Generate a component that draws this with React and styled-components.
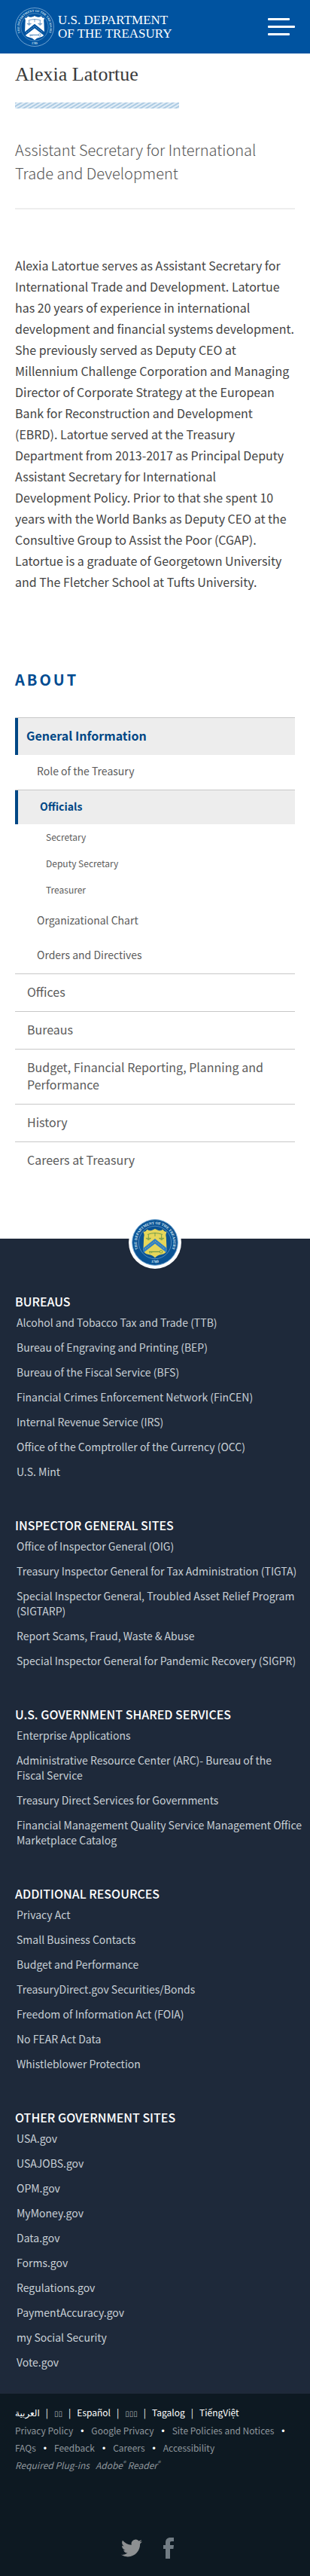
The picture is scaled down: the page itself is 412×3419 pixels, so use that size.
import React, { useId } from "react";
import styled, { createGlobalStyle } from "styled-components";

const sans = '"Noto Sans CJK SC", "Noto Sans", "DejaVu Sans", sans-serif';
const serif = '"Liberation Serif", serif';

const GlobalStyle = createGlobalStyle`
  *, *::before, *::after { box-sizing: border-box; }
  body {
    margin: 0;
    background: #fff;
    color: #444;
    font-family: ${sans};
    font-size: 16px;
  }
  h1, h2, h3, p, ul { margin: 0; padding: 0; }
  ul { list-style: none; }
  a { color: inherit; text-decoration: none; }
`;

const Header = styled.header`
  display: flex;
  align-items: center;
  justify-content: space-between;
  height: 71px;
  padding: 0 20px;
  background: #0053a0;
`;

const Brand = styled.a`
  display: flex;
  align-items: center;
  gap: 5px;
  color: #fff;
  font: 17px/18px ${serif};
`;

const MenuButton = styled.button`
  display: flex;
  flex-direction: column;
  gap: 7px;
  width: 36px;
  padding: 0;
  border: 0;
  background: none;
`;

const MenuBar = styled.span`
  width: ${(p) => (p.$long ? 36 : 29)}px;
  height: 3px;
  border-radius: 1px;
  background: #fff;
`;

const Main = styled.main`
  padding: 11px 20px 79px;
`;

const Title = styled.h1`
  color: #3b3b3b;
  font: 400 26px/34px ${serif};
`;

const Stripes = styled.div`
  max-width: 218px;
  height: 8px;
  margin: 20px 0 39px;
  background: repeating-linear-gradient(
    149deg,
    #adcbe3 0,
    #adcbe3 1px,
    #e3eef7 2px,
    #e3eef7 3px,
    #adcbe3 4px
  );
`;

const Role = styled.p`
  padding-bottom: 31px;
  border-bottom: 2px solid #eee;
  color: #555;
  font-size: 20px;
  font-weight: 300;
  line-height: 31px;
`;

const Bio = styled.p`
  margin: 60px 0 102px;
  color: #444;
  line-height: 28px;
`;

const AboutHeading = styled.h2`
  margin-bottom: 36px;
  color: #004b91;
  font-size: 20px;
  font-weight: 700;
  letter-spacing: 3px;
  line-height: 28px;
`;

const NavRow = styled.a`
  display: block;
  padding: 12px 16px 14px ${(p) => (p.$active ? 15 : 16)}px;
  border-top: 1px solid #c8c8c8;
  color: #5b5b5b;
  font-size: 16px;
  line-height: 23px;
  ${(p) =>
    p.$active &&
    `
    background: #ededed;
    box-shadow: inset 4px 0 #004785;
    color: #004785;
    font-weight: 700;
  `}
`;

const SubRow = styled.a`
  display: block;
  padding: 11px 16px 15px 29px;
  color: #5b5b5b;
  font-size: 14px;
  line-height: 20px;
  ${(p) =>
    p.$active &&
    `
    padding: 11px 16px 14px 33px;
    border-top: 1px solid #c8c8c8;
    background: #ededed;
    box-shadow: inset 4px 0 #004785;
    color: #004785;
    font-weight: 700;
  `}
`;

const LeafList = styled.ul`
  padding-bottom: 1px;
`;

const LeafRow = styled.a`
  display: block;
  padding: 8px 16px 9px 41px;
  color: #5b5b5b;
  font-size: 12px;
  line-height: 18px;
`;

const Footer = styled.footer`
  background: #1e293a;
`;

const SealBadge = styled.div`
  display: flex;
  align-items: center;
  justify-content: center;
  width: 70px;
  height: 70px;
  margin: 0 auto;
  position: relative;
  top: -30px;
  border-radius: 50%;
  background: #fff;
`;

const FooterBody = styled.div`
  display: flex;
  flex-direction: column;
  gap: 49px;
  padding: 1px 8px 32px 20px;
`;

const FooterHeading = styled.h3`
  margin-bottom: 6px;
  color: #fff;
  font-size: 16px;
  font-weight: 500;
  line-height: 24px;
`;

const FooterList = styled.ul`
  display: flex;
  flex-direction: column;
  gap: 13px;
  padding-left: 2px;
  color: #c9d0d6;
  font-size: 14px;
  line-height: 20px;
`;

const Legal = styled.div`
  padding: 14px 20px 27px;
  background: #0d1922;
  color: #fff;
  font-size: 12px;
  line-height: 22px;
`;

const LinkLine = styled.ul`
  display: flex;
  flex-wrap: wrap;
  color: #8f979d;

  li:not(:last-child)::after {
    content: "•";
    margin: 0 10px;
    color: #fff;
    font-family: "Liberation Sans", sans-serif;
  }
`;

const LanguageLine = styled(LinkLine)`
  color: #fff;

  li:not(:last-child)::after {
    content: "|";
    margin: 0 8px;
    font-family: ${sans};
  }
`;

const Tofu = styled.span`
  color: #aab0b5;
  font-family: "DejaVu Sans", sans-serif;
  font-size: 10px;
`;

const PlugIns = styled.p`
  display: flex;
  gap: 8px;
  color: #8f979d;
  font-style: italic;

  sup { font-size: 8px; line-height: 0; }
`;

const Social = styled.div`
  display: flex;
  align-items: center;
  justify-content: center;
  gap: 28px;
  padding-right: 20px;
  margin-top: 85px;

  a { display: block; height: 28px; }
  svg { display: block; }
`;

function Seal({ size, field, ring, ink, shield, chevron, detail }) {
  const id = useId();
  return (
    <svg width={size} height={size} viewBox="0 0 100 100" aria-hidden="true">
      <defs>
        <path id={`${id}t`} d="M 20.100 75.100 A 39 39 0 1 1 79.900 75.100" />
        <path id={`${id}b`} d="M 30 89 A 44 44 0 0 0 70 89" />
      </defs>
      <circle cx="50" cy="50" r="49" fill={field} stroke={ring} strokeWidth="1.5" />
      <circle cx="50" cy="50" r="35" fill="none" stroke={ring} strokeWidth="1" />
      <text fill={ink} fontFamily="Liberation Serif, serif" fontWeight="700" fontSize="8">
        <textPath href={`#${id}t`} startOffset="50%" textAnchor="middle">
          THE DEPARTMENT OF THE TREASURY
        </textPath>
      </text>
      <text fill={ink} fontFamily="Liberation Serif, serif" fontWeight="700" fontSize="8">
        <textPath href={`#${id}b`} startOffset="50%" textAnchor="middle">1789</textPath>
      </text>
      <path
        d="M25 27 Q31 27 33 22 Q38 26 43 24 Q47 23 50 21 Q53 23 57 24 Q62 26 67 22 Q69 27 75 27 Q72 33 74 40 L75 66 Q74 74 64 76 Q55 77 50 83 Q45 77 36 76 Q26 74 25 66 L26 40 Q28 33 25 27 Z"
        fill={shield}
      />
      <path d="M25 62 L50 42 L75 62 V72 L50 53 L25 72 Z" fill={chevron} />
      <path d="M29 64 L50 47.500 L71 64" fill="none" stroke={shield} strokeWidth="1.6" strokeDasharray="1.500 3" />
      <g fill="none" stroke={detail} strokeWidth="1.500">
        <path d="M34 33 Q50 27 66 33 M50 29 V37 M36 33 V45 M64 33 V45" />
        <path d="M31 41 Q36 48 41 41 Z M59 41 Q64 48 69 41 Z" />
        <path d="M37 70 H60" strokeWidth="2" />
        <circle cx="63" cy="70" r="3" />
        <path d="M39 70 V74 M43 70 V73" />
      </g>
    </svg>
  );
}

const footerSections = [
  ["BUREAUS", [
    "Alcohol and Tobacco Tax and Trade (TTB)",
    "Bureau of Engraving and Printing (BEP)",
    "Bureau of the Fiscal Service (BFS)",
    "Financial Crimes Enforcement Network (FinCEN)",
    "Internal Revenue Service (IRS)",
    "Office of the Comptroller of the Currency (OCC)",
    "U.S. Mint",
  ]],
  ["INSPECTOR GENERAL SITES", [
    "Office of Inspector General (OIG)",
    "Treasury Inspector General for Tax Administration (TIGTA)",
    "Special Inspector General, Troubled Asset Relief Program (SIGTARP)",
    "Report Scams, Fraud, Waste & Abuse",
    "Special Inspector General for Pandemic Recovery (SIGPR)",
  ]],
  ["U.S. GOVERNMENT SHARED SERVICES", [
    "Enterprise Applications",
    "Administrative Resource Center (ARC)- Bureau of the Fiscal\u00a0Service",
    "Treasury Direct Services for Governments",
    "Financial Management Quality Service Management Office Marketplace Catalog",
  ]],
  ["ADDITIONAL RESOURCES", [
    "Privacy Act",
    "Small Business Contacts",
    "Budget and Performance",
    "TreasuryDirect.gov Securities/Bonds",
    "Freedom of Information Act (FOIA)",
    "No FEAR Act Data",
    "Whistleblower Protection",
  ]],
  ["OTHER GOVERNMENT SITES", [
    "USA.gov",
    "USAJOBS.gov",
    "OPM.gov",
    "MyMoney.gov",
    "Data.gov",
    "Forms.gov",
    "Regulations.gov",
    "PaymentAccuracy.gov",
    "my Social Security",
    "Vote.gov",
  ]],
];

const languages = ["العربية", <Tofu>▯▯</Tofu>, "Español", <Tofu>▯▯▯</Tofu>, "Tagalog", "TiếngViệt"];
const policies = [
  "Privacy Policy", "Google Privacy", "Site Policies and Notices",
  "FAQs", "Feedback", "Careers", "Accessibility",
];

function Links({ items }) {
  return items.map((item, i) => (
    <li key={i}><a href="#">{item}</a></li>
  ));
}

export default function App() {
  return (
    <>
      <GlobalStyle />
      <Header>
        <Brand href="#">
          <Seal size={52} field="#0053a0" ring="#8fb9de" ink="#d5e6f5" shield="#fff" chevron="#0053a0" detail="#4d86bd" />
          <span>U.S. DEPARTMENT<br />OF THE TREASURY</span>
        </Brand>
        <MenuButton aria-label="Menu">
          <MenuBar />
          <MenuBar $long />
          <MenuBar />
        </MenuButton>
      </Header>

      <Main>
        <Title>Alexia Latortue</Title>
        <Stripes />
        <Role>Assistant Secretary for International Trade and Development</Role>
        <Bio>
          Alexia Latortue serves as Assistant Secretary for International Trade and
          Development. Latortue has 20 years of experience in international development
          and financial systems development. She previously served as Deputy CEO at
          Millennium Challenge Corporation and Managing Director of Corporate Strategy at
          the European Bank for Reconstruction and Development (EBRD). Latortue served at
          the Treasury Department from 2013-2017 as Principal Deputy Assistant Secretary
          for International Development&nbsp;Policy. Prior to that she spent 10 years with
          the World Banks as Deputy CEO at the Consultive Group to Assist the Poor (CGAP).
          Latortue is a graduate of Georgetown University and The Fletcher School at Tufts
          University.
        </Bio>

        <AboutHeading>ABOUT</AboutHeading>
        <nav aria-label="About">
          <ul>
            <li>
              <NavRow href="#" $active>General Information</NavRow>
              <ul>
                <li><SubRow href="#">Role of the Treasury</SubRow></li>
                <li>
                  <SubRow href="#" $active>Officials</SubRow>
                  <LeafList>
                    <li><LeafRow href="#">Secretary</LeafRow></li>
                    <li><LeafRow href="#">Deputy Secretary</LeafRow></li>
                    <li><LeafRow href="#">Treasurer</LeafRow></li>
                  </LeafList>
                </li>
                <li><SubRow href="#">Organizational Chart</SubRow></li>
                <li><SubRow href="#">Orders and Directives</SubRow></li>
              </ul>
            </li>
            <li><NavRow href="#">Offices</NavRow></li>
            <li><NavRow href="#">Bureaus</NavRow></li>
            <li><NavRow href="#">Budget, Financial Reporting, Planning and Performance</NavRow></li>
            <li><NavRow href="#">History</NavRow></li>
            <li><NavRow href="#">Careers at Treasury</NavRow></li>
          </ul>
        </nav>
      </Main>

      <Footer>
        <SealBadge>
          <Seal size={62} field="#0b5394" ring="#7fb0d8" ink="#dcebf5" shield="#e6d65a" chevron="#2f7fc6" detail="#6f9a4a" />
        </SealBadge>
        <FooterBody>
          {footerSections.map(([title, items]) => (
            <section key={title}>
              <FooterHeading>{title}</FooterHeading>
              <FooterList><Links items={items} /></FooterList>
            </section>
          ))}
        </FooterBody>
        <Legal>
          <LanguageLine><Links items={languages} /></LanguageLine>
          <LinkLine><Links items={policies} /></LinkLine>
          <PlugIns>
            <span>Required Plug-ins</span>
            <a href="#">Adobe<sup>®</sup> Reader<sup>®</sup></a>
          </PlugIns>
          <Social>
            <a href="#" aria-label="Twitter">
              <svg width="28" height="28" viewBox="0 0 24 24" fill="#8d9092">
                <path d="M23.950 4.570a10 10 0 0 1-2.820.775 4.960 4.960 0 0 0 2.160-2.723c-.951.555-2.005.959-3.127 1.184a4.920 4.920 0 0 0-8.384 4.482C7.690 8.095 4.067 6.130 1.640 3.162a4.820 4.820 0 0 0-.666 2.475c0 1.710.87 3.213 2.188 4.096a4.900 4.900 0 0 1-2.228-.616v.06a4.920 4.920 0 0 0 3.946 4.827 5 5 0 0 1-2.212.085 4.940 4.940 0 0 0 4.604 3.417 9.870 9.870 0 0 1-6.102 2.105c-.39 0-.779-.023-1.170-.067a14 14 0 0 0 7.557 2.209c9.053 0 13.998-7.496 13.998-13.985 0-.21 0-.42-.015-.63a9.900 9.900 0 0 0 2.460-2.548z" />
              </svg>
            </a>
            <a href="#" aria-label="Facebook">
              <svg width="14" height="28" viewBox="0 0 14 28" fill="#717c84">
                <path d="M3 28V15H0V10H3V7C3 2 5.500 0 9.500 0H14V5H11C9.500 5 9 5.700 9 7V10H14L13.400 15H9V28Z" />
              </svg>
            </a>
          </Social>
        </Legal>
      </Footer>
    </>
  );
}
